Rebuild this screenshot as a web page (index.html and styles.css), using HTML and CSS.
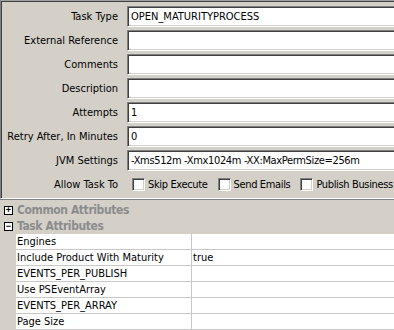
FILE: index.html
```html
<!DOCTYPE html>
<html>
<head>
<meta charset="utf-8">
<link rel="stylesheet" href="styles.css">
</head>
<body>
<div class="top-panel">
  <div class="form">
    <div class="label">Task Type</div>
    <div class="field">OPEN_MATURITYPROCESS</div>
    <div class="label">External Reference</div>
    <div class="field"></div>
    <div class="label">Comments</div>
    <div class="field"></div>
    <div class="label">Description</div>
    <div class="field"></div>
    <div class="label">Attempts</div>
    <div class="field">1</div>
    <div class="label">Retry After, In Minutes</div>
    <div class="field">0</div>
    <div class="label">JVM Settings</div>
    <div class="field jvm">-Xms512m -Xmx1024m -XX:MaxPermSize=256m</div>
    <div class="label">Allow Task To</div>
    <div class="checks">
      <span class="check"><span class="cb"></span>Skip Execute</span>
      <span class="check"><span class="cb"></span>Send Emails</span>
      <span class="check"><span class="cb"></span>Publish Business</span>
    </div>
  </div>
</div>
<div class="attrs">
  <div class="group"><span class="tog">+</span>Common Attributes</div>
  <div class="group"><span class="tog">−</span>Task Attributes</div>
  <div class="grid">
    <div class="row"><div class="c1">Engines</div><div class="c2"></div></div>
    <div class="row"><div class="c1">Include Product With Maturity</div><div class="c2">true</div></div>
    <div class="row"><div class="c1">EVENTS_PER_PUBLISH</div><div class="c2"></div></div>
    <div class="row"><div class="c1">Use PSEventArray</div><div class="c2"></div></div>
    <div class="row"><div class="c1">EVENTS_PER_ARRAY</div><div class="c2"></div></div>
    <div class="row"><div class="c1">Page Size</div><div class="c2"></div></div>
  </div>
</div>
</body>
</html>
```
FILE: styles.css
```css
html, body {
  margin: 0;
  padding: 0;
  background: #d4d0c8;
  overflow: hidden;
  width: 394px;
  height: 330px;
}
body {
  font-family: "DejaVu Sans Condensed", "DejaVu Sans", sans-serif;
  font-stretch: condensed;
  font-size: 11px;
  color: #000;
}
.top-panel {
  border-top: 1px solid #a0a0a0;
  border-left: 1px solid #808080;
  box-shadow: inset 1px 1px 0 #404040;
  border-bottom: 1px solid #ffffff;
  padding-top: 5px;
  box-sizing: border-box;
  height: 199px;
}
.form {
  display: grid;
  grid-template-columns: 117px 1fr;
  column-gap: 9px;
  row-gap: 3px;
}
.label {
  text-align: right;
  height: 21px;
  line-height: 21px;
  white-space: nowrap;
}
.field {
  height: 21px;
  box-sizing: border-box;
  background: #fff;
  border-top: 1px solid #808080;
  border-left: 1px solid #808080;
  border-bottom: 1px solid #fff;
  box-shadow: inset 1px 1px 0 #404040, inset 0 -1px 0 #d4d0c8;
  padding-left: 3px;
  line-height: 19px;
  white-space: nowrap;
  overflow: hidden;
}
.jvm {
  letter-spacing: -0.35px;
}
.checks {
  display: flex;
  align-items: center;
  height: 21px;
  padding-left: 5px;
  white-space: nowrap;
  letter-spacing: -0.35px;
  overflow: hidden;
}
.check {
  display: flex;
  align-items: center;
  margin-right: 10px;
}
.check:last-child {
  margin-right: 0;
}
.cb {
  width: 13px;
  height: 13px;
  flex: none;
  box-sizing: border-box;
  background: #fff;
  border-top: 1px solid #808080;
  border-left: 1px solid #808080;
  border-bottom: 1px solid #fff;
  border-right: 1px solid #fff;
  box-shadow: inset 1px 1px 0 #404040, inset -1px -1px 0 #d4d0c8;
  margin-right: 3px;
}
.attrs {
  border-top: 1px solid #808080;
  padding-top: 2px;
}
.group {
  display: flex;
  align-items: center;
  height: 16px;
  font-weight: bold;
  font-size: 12px;
  letter-spacing: -0.4px;
  color: #8c8c8c;
  white-space: nowrap;
}
.tog {
  width: 9px;
  height: 9px;
  box-sizing: border-box;
  border: 1px solid #000;
  background: #fff;
  color: #000;
  font-family: "Liberation Sans", sans-serif;
  font-size: 9px;
  line-height: 6px;
  letter-spacing: 0;
  text-align: center;
  font-weight: bold;
  margin-left: 4px;
  margin-right: 4px;
  overflow: hidden;
}
.grid {
  margin-left: 16px;
  background: #fff;
}
.row {
  display: flex;
  height: 16px;
  box-sizing: border-box;
  border-bottom: 1px solid #c8c8c8;
}
.c1 {
  width: 176px;
  box-sizing: border-box;
  border-right: 1px solid #c8c8c8;
  padding-left: 1px;
  line-height: 15px;
  white-space: nowrap;
}
.c2 {
  flex: 1;
  padding-left: 1px;
  line-height: 15px;
}
```
